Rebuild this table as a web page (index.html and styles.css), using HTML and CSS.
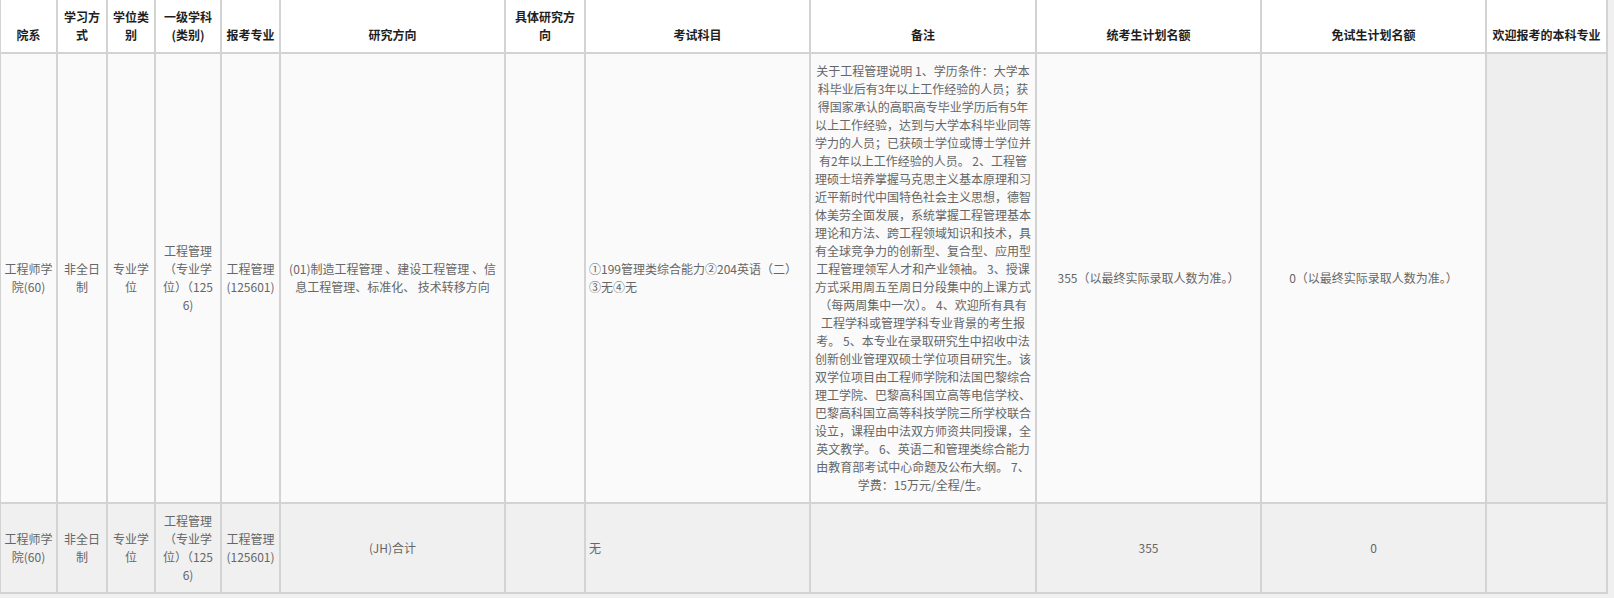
FILE: index.html
```html
<!DOCTYPE html>
<html lang="zh-CN">
<head>
<meta charset="utf-8">
<title>专业目录</title>
<link rel="stylesheet" href="styles.css">
</head>
<body>
<table class="catalog">
  <colgroup>
    <col class="c-dept"><col class="c-mode"><col class="c-type"><col class="c-disc"><col class="c-major">
    <col class="c-dir"><col class="c-sub"><col class="c-exam"><col class="c-note">
    <col class="c-plan"><col class="c-free"><col class="c-welcome">
  </colgroup>
  <thead>
    <tr>
      <th>院系</th>
      <th>学习方式</th>
      <th>学位类别</th>
      <th>一级学科(类别)</th>
      <th>报考专业</th>
      <th>研究方向</th>
      <th>具体研究方向</th>
      <th>考试科目</th>
      <th>备注</th>
      <th>统考生计划名额</th>
      <th>免试生计划名额</th>
      <th>欢迎报考的本科专业</th>
    </tr>
  </thead>
  <tbody>
    <tr class="row-main">
      <td>工程师学院(60)</td>
      <td>非全日制</td>
      <td>专业学位</td>
      <td>工程管理（专业学位）（1256)</td>
      <td>工程管理(125601)</td>
      <td>(01)制造工程管理 、建设工程管理 、信息工程管理、标准化、 技术转移方向</td>
      <td></td>
      <td class="left">①199管理类综合能力②204英语（二）③无④无</td>
      <td>关于工程管理说明 1、学历条件：大学本科毕业后有3年以上工作经验的人员；获得国家承认的高职高专毕业学历后有5年以上工作经验，达到与大学本科毕业同等学力的人员；已获硕士学位或博士学位并有2年以上工作经验的人员。 2、工程管理硕士培养掌握马克思主义基本原理和习近平新时代中国特色社会主义思想，德智体美劳全面发展，系统掌握工程管理基本理论和方法、跨工程领域知识和技术，具有全球竞争力的创新型、复合型、应用型工程管理领军人才和产业领袖。 3、授课方式采用周五至周日分段集中的上课方式（每两周集中一次）。 4、欢迎所有具有工程学科或管理学科专业背景的考生报考。 5、本专业在录取研究生中招收中法创新创业管理双硕士学位项目研究生。该双学位项目由工程师学院和法国巴黎综合理工学院、巴黎高科国立高等电信学校、巴黎高科国立高等科技学院三所学校联合设立，课程由中法双方师资共同授课，全英文教学。 6、英语二和管理类综合能力由教育部考试中心命题及公布大纲。 7、学费：15万元/全程/生。</td>
      <td>355（以最终实际录取人数为准。）</td>
      <td>0（以最终实际录取人数为准。）</td>
      <td class="welcome"></td>
    </tr>
    <tr class="row-total">
      <td>工程师学院(60)</td>
      <td>非全日制</td>
      <td>专业学位</td>
      <td>工程管理（专业学位）（1256)</td>
      <td>工程管理(125601)</td>
      <td>(JH)合计</td>
      <td></td>
      <td class="left">无</td>
      <td></td>
      <td>355</td>
      <td>0</td>
      <td class="welcome"></td>
    </tr>
  </tbody>
</table>
</body>
</html>
```

FILE: styles.css
```css
html, body {
  margin: 0;
  padding: 0;
}

body {
  background: #f0f0f0;
  font-family: "Noto Sans CJK SC", "Noto Sans", sans-serif;
  font-size: 12px;
  line-height: 18px;
}

.catalog {
  table-layout: fixed;
  width: 1608px;
  border-collapse: separate;
  border-spacing: 0;
}

.c-dept { width: 58px; }
.c-mode { width: 50px; }
.c-type { width: 48px; }
.c-disc { width: 66px; }
.c-major { width: 59px; }
.c-dir { width: 225px; }
.c-sub { width: 80px; }
.c-exam { width: 225px; }
.c-note { width: 226px; }
.c-plan { width: 225px; }
.c-free { width: 225px; }
.c-welcome { width: 121px; }

.catalog th,
.catalog td {
  box-sizing: border-box;
  border-right: 2px solid #d3d3d3;
  border-bottom: 2px solid #d3d3d3;
  padding: 8px 4px;
  text-align: center;
}

.catalog th:first-child,
.catalog td:first-child {
  border-left: 1px solid #d3d3d3;
  padding-left: 3px;
  padding-right: 3px;
}

.catalog th {
  background: #ffffff;
  color: #1e1e1e;
  font-weight: 700;
  vertical-align: bottom;
  padding-top: 8px;
  padding-bottom: 8px;
}

.catalog td {
  color: #666666;
  vertical-align: middle;
  word-break: break-all;
}

.row-main td {
  background: #fafafa;
}

.row-total td {
  background: #f0f0f0;
}

.row-main td.welcome {
  background: #eeeeee;
}

.catalog td.left {
  text-align: left;
  padding-left: 3px;
}
```
